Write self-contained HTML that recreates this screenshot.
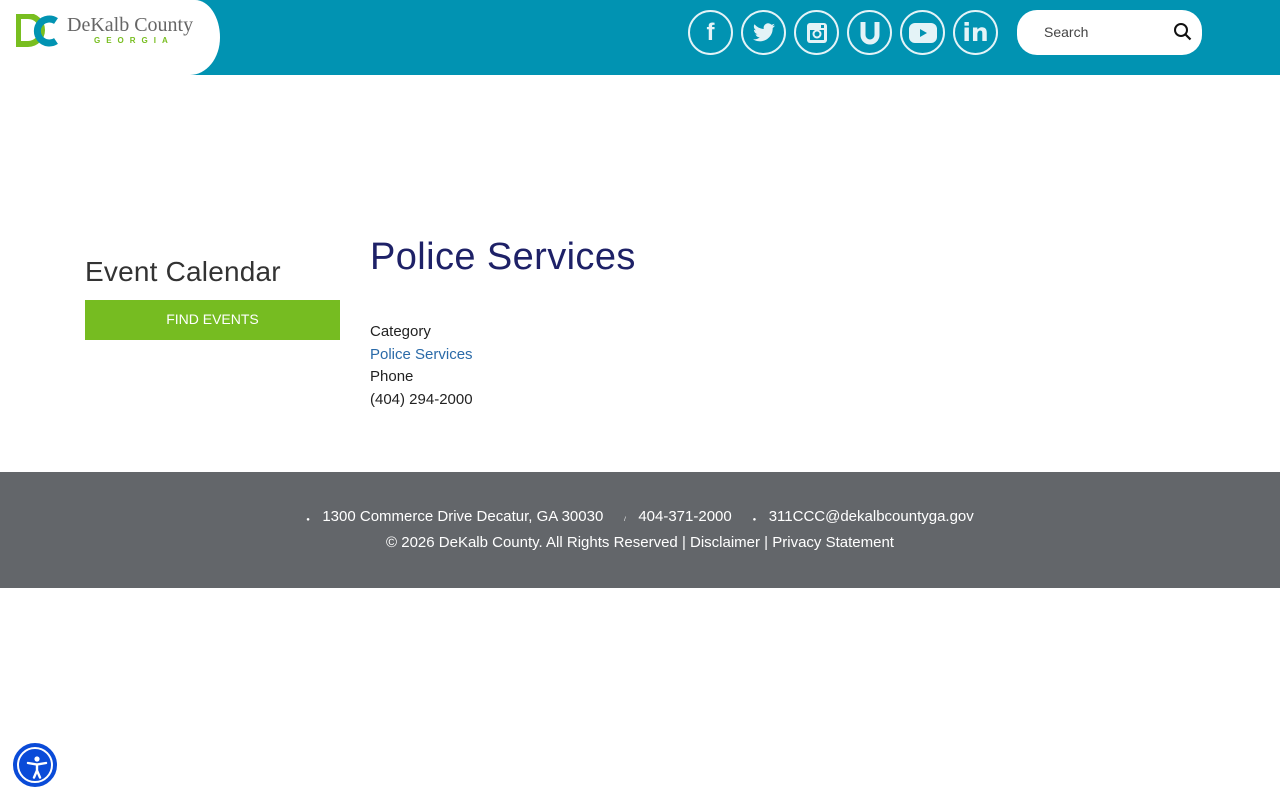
<!DOCTYPE html>
<html><head><meta charset="utf-8"><style>
*{margin:0;padding:0;box-sizing:border-box}
body{width:1280px;height:800px;background:#fff;font-family:"Liberation Sans",sans-serif;position:relative;overflow:hidden}
.hdr{position:absolute;left:0;top:0;width:1280px;height:75px;background:#0193b2}
.logo{position:absolute;left:0;top:0;width:220px;height:75px;background:#fff;border-radius:0 50px 60px 0/0 75px 75px 0}
.soc{position:absolute;top:10px;width:45px;height:45px;border:2.5px solid #e4f3f7;border-radius:50%;display:flex;align-items:center;justify-content:center;color:#e4f3f7;font-weight:bold}
.search{position:absolute;left:1017px;top:10px;width:185px;height:45px;background:#fff;border-radius:20px}
.search span{position:absolute;left:27px;top:14px;font-size:14px;color:#444}
h1{position:absolute;left:370px;top:236px;font-size:38px;font-weight:normal;color:#1e2167;letter-spacing:0.4px}
.ev{position:absolute;left:85px;top:256px;font-size:28px;color:#333;letter-spacing:0.2px}
.btn{position:absolute;left:85px;top:300px;width:255px;height:40px;background:#76bc21;color:#fff;font-size:14px;text-align:center;line-height:38px}
.info{position:absolute;left:370px;top:321px;font-size:15px;line-height:22.6px;color:#222}
.info a{color:#2a6aa8;text-decoration:none}
.ftr{position:absolute;left:0;top:472px;width:1280px;height:116px;background:#63666a;color:#fff;font-size:15px;text-align:center}
.acc{position:absolute;left:13px;top:743px;width:44px;height:44px;border-radius:50%;background:#0a4bd8;border:2px solid #0a4bd8}
.acc div{position:absolute;inset:2px;border:2px solid #fff;border-radius:50%}
</style></head><body>
<div class="hdr"></div>
<div class="logo">
<svg width="45" height="34" style="position:absolute;left:16px;top:14px" viewBox="0 0 45 34"><path d="M2 2h10a14 14 0 0 1 0 28H2z" fill="none" stroke="#78be20" stroke-width="6"/><path d="M40 7a12 12 0 1 0 0 20" fill="none" stroke="#0193b2" stroke-width="7"/></svg>
<div style="position:absolute;left:67px;top:14px;font-family:'Liberation Serif',serif;font-size:20px;color:#666">DeKalb County</div>
<div style="position:absolute;left:94px;top:36px;font-size:8px;letter-spacing:6px;color:#78be20;font-weight:bold">GEORGIA</div>
</div>
<div class="soc" style="left:688px;font-size:24px">f</div>
<div class="soc" style="left:741px"><svg width="24" height="20" viewBox="0 0 24 20"><path d="M23 2.5c-.8.4-1.7.6-2.6.7.9-.6 1.6-1.4 2-2.5-.9.5-1.9.9-2.9 1.1A4.5 4.5 0 0 0 11.8 6 12.8 12.8 0 0 1 2.5 1.3a4.5 4.5 0 0 0 1.4 6 4.5 4.5 0 0 1-2-.6 4.5 4.5 0 0 0 3.6 4.5 4.5 4.5 0 0 1-2 .1 4.5 4.5 0 0 0 4.2 3.1A9 9 0 0 1 1 16.3 12.8 12.8 0 0 0 20.7 5.5V5c.9-.7 1.7-1.5 2.3-2.5z" fill="#e4f3f7"/></svg></div>
<div class="soc" style="left:794px"><svg width="22" height="22" viewBox="0 0 22 22"><rect x="1" y="1" width="20" height="20" rx="3" fill="#e4f3f7"/><rect x="4" y="8" width="14" height="10" fill="#0193b2"/><circle cx="11" cy="12" r="4.5" fill="#e4f3f7"/><circle cx="11" cy="12" r="2.5" fill="#0193b2"/><rect x="15" y="3" width="3" height="3" fill="#0193b2"/></svg></div>
<div class="soc" style="left:847px"><svg width="20" height="24" viewBox="0 0 20 24"><path d="M3 1v13a7 7 0 0 0 14 0V1" fill="none" stroke="#e4f3f7" stroke-width="5"/></svg></div>
<div class="soc" style="left:900px"><svg width="28" height="20" viewBox="0 0 28 20"><rect x="0" y="0" width="28" height="20" rx="6" fill="#e4f3f7"/><path d="M11 6l7 4-7 4z" fill="#0193b2"/></svg></div>
<div class="soc" style="left:953px;font-size:25px;font-family:'DejaVu Sans',sans-serif">in</div>
<div class="search"><span>Search</span><svg width="20" height="20" style="position:absolute;left:156px;top:12px" viewBox="0 0 20 20"><circle cx="8" cy="8" r="6" fill="none" stroke="#111" stroke-width="2"/><path d="M12.5 12.5l5 5" stroke="#111" stroke-width="2.2"/></svg></div>
<h1>Police Services</h1>
<div class="ev">Event Calendar</div>
<div class="btn">FIND EVENTS</div>
<div class="info">Category<br><a>Police Services</a><br>Phone<br>(404) 294-2000</div>
<div class="ftr">
<div style="position:absolute;left:0;width:1280px;top:36px"><span style="font-size:6px">●</span>&nbsp;&nbsp; 1300 Commerce Drive Decatur, GA 30030 &nbsp;&nbsp;&nbsp;&nbsp;<span style="font-size:6px">/</span>&nbsp;&nbsp; 404-371-2000 &nbsp;&nbsp;&nbsp;&nbsp;<span style="font-size:6px">●</span>&nbsp;&nbsp; 311CCC@dekalbcountyga.gov</div>
<div style="position:absolute;left:0;width:1280px;top:62px">© 2026 DeKalb County. All Rights Reserved | Disclaimer | Privacy Statement</div>
</div>
<div class="acc"><div><svg width="36" height="36" viewBox="0 0 36 36" style="position:absolute;left:0;top:0"><circle cx="18" cy="10" r="2.6" fill="#fff"/><path d="M9 14l9 1.5 9-1.5M18 15.5v6l-3 7M18 21.5l3 7" stroke="#fff" stroke-width="2.4" fill="none" stroke-linecap="round"/></svg></div></div>
</body></html>
